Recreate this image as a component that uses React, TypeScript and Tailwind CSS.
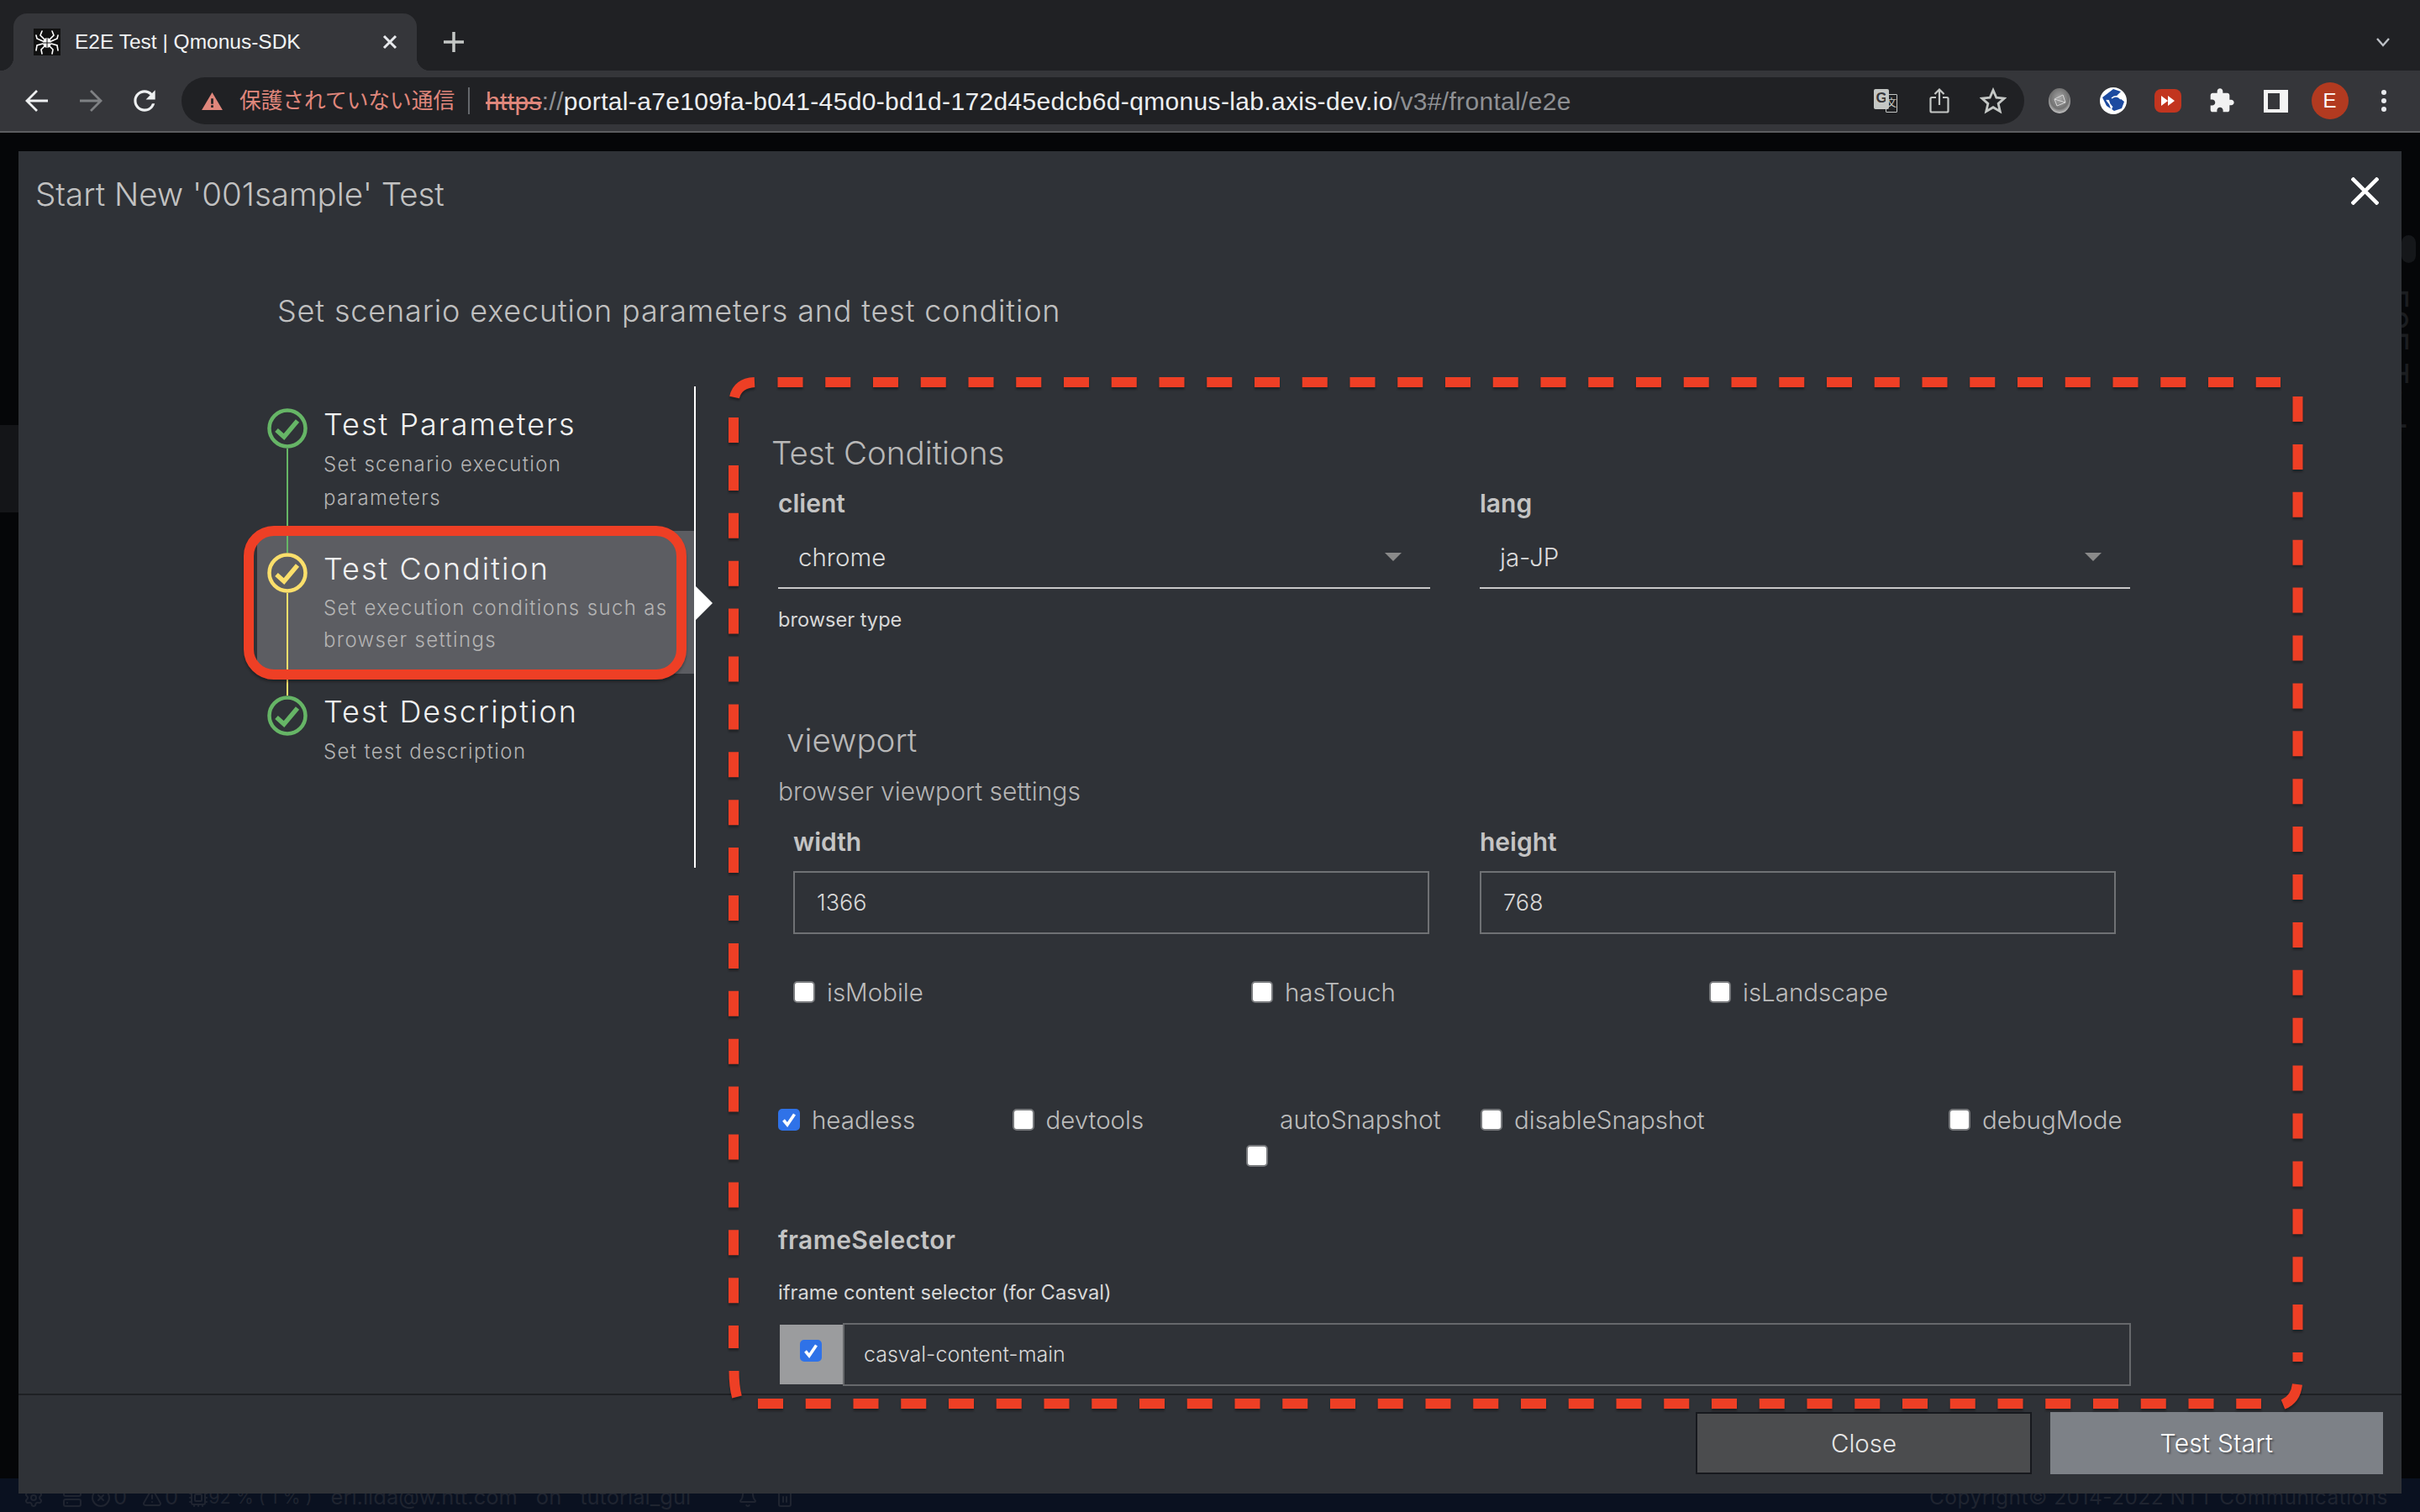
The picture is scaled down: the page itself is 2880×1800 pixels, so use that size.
import React from "react";
import { Settings, Server, XCircle, AlertTriangle, Cpu, Bell, Trash2 } from "lucide-react";

const Spider = () => (
  <svg viewBox="0 0 32 32" className="w-8 h-8">
    <rect width="32" height="32" fill="#111" />
    <g stroke="#fff" strokeWidth="1.6" fill="none" strokeLinecap="round">
      <path d="M13 13 L8 8 L10 3" />
      <path d="M19 13 L24 8 L22 3" />
      <path d="M11 15 L4 12 L3 8" />
      <path d="M21 15 L28 12 L29 8" />
      <path d="M11 18 L4 20 L3 26" />
      <path d="M21 18 L28 20 L29 26" />
      <path d="M13 21 L9 25 L10 30" />
      <path d="M19 21 L23 25 L22 30" />
    </g>
    <ellipse cx="16" cy="17" rx="5" ry="6" fill="#fff" />
    <path d="M11 17 H21 M16 11 V23" stroke="#111" strokeWidth="1" />
  </svg>
);

const StepCheck = ({ color }: { color: string }) => (
  <svg viewBox="0 0 48 48" className="w-12 h-12 shrink-0">
    <circle cx="24" cy="24" r="21.5" fill="none" stroke={color} strokeWidth="4.5" />
    <path d="M11 26 L20 34 L36 15" fill="none" stroke={color} strokeWidth="5.5" />
  </svg>
);

const Step = ({
  title,
  lines,
  color,
  prev,
  active,
  h,
  last,
}: {
  title: string;
  lines: string[];
  color: string;
  prev?: string;
  active?: boolean;
  h: string;
  last?: boolean;
}) => (
  <div className={`relative flex ${h} pl-3 ${active ? "bg-[#5c5d62]" : ""}`}>
    <div className="flex flex-col items-center w-12 shrink-0">
      <div className="w-[2px] h-[26px]" style={{ background: prev ?? "transparent" }} />
      <StepCheck color={color} />
      {!last && <div className="w-[2px] flex-1" style={{ background: color }} />}
    </div>
    <div className="ml-[19px] pt-[24px] min-w-0">
      <div className="text-[36px] leading-[42px] tracking-[2px] font-light text-[#f2f2f2] whitespace-nowrap">{title}</div>
      <div className="mt-[7px]">
        {lines.map((l) => (
          <div key={l} className={`text-[24px] ${active ? "leading-[38px]" : "leading-[40px]"} tracking-[1.35px] font-light text-[#b4b4b4] whitespace-nowrap`}>
            {l}
          </div>
        ))}
      </div>
    </div>
    {active && (
      <div className="absolute top-[66px] -right-[22px] w-0 h-0 border-y-[20px] border-l-[20px] border-y-transparent border-l-white" />
    )}
  </div>
);

const Box = ({ checked }: { checked?: boolean }) => (
  <span className="relative inline-flex w-[26px] h-[26px] shrink-0">
    <input
      type="checkbox"
      defaultChecked={checked}
      className="appearance-none w-[26px] h-[26px] m-0 rounded-[5px] bg-white border-2 border-[#77797c] checked:bg-[#2f72e8] checked:border-[#2f72e8]"
    />
    {checked && (
      <svg viewBox="0 0 26 26" className="absolute inset-0 w-[26px] h-[26px] pointer-events-none" fill="none" stroke="#fff" strokeWidth="3.6">
        <path d="M6.5 13.5 L11 19 L19.5 6.5" />
      </svg>
    )}
  </span>
);

const Check = ({ label, checked, cls }: { label: string; checked?: boolean; cls: string }) => (
  <label className={`flex items-center h-10 ${cls}`}>
    <Box checked={checked} />
    <span className="ml-[14px] text-[29.5px] font-light text-[#bcbcbc] whitespace-nowrap">{label}</span>
  </label>
);

const Label = ({ children, cls = "" }: { children: React.ReactNode; cls?: string }) => (
  <div className={`text-[30px] leading-10 font-semibold text-[#c4c4c4] ${cls}`}>{children}</div>
);

const Select = ({ value }: { value: string }) => (
  <div className="mt-[2px] flex items-center justify-between h-[80px] pt-[6px] pl-[24px] pr-[34px] border-b-2 border-[#c8c8c8]">
    <span className="text-[29.5px] font-light text-[#dcdcdc]">{value}</span>
    <span className="w-0 h-0 border-x-[10px] border-t-[10px] border-x-transparent border-t-[#8a8a8a]" />
  </div>
);

const Field = ({ value }: { value: string }) => (
  <input
    readOnly
    value={value}
    className="w-full h-[75px] px-[26px] border-2 border-[#6f7174] bg-transparent text-[27px] font-light text-[#d8d8d8] outline-none"
  />
);

const ChromeIconSlot = ({ children }: { children: React.ReactNode }) => (
  <div className="w-[64.3px] h-[64px] flex items-center justify-center shrink-0">{children}</div>
);

const DashedOverlay = () => (
  <svg
    viewBox="0 0 2880 1800"
    className="absolute inset-0 w-[2880px] h-[1800px] pointer-events-none drop-shadow-[0_3px_1px_rgba(0,0,0,0.3)]"
    fill="none"
    stroke="#ee3f25"
    strokeWidth="12"
  >
    <path d="M925.5 455 H2714" strokeDasharray="30 26.75" />
    <path d="M2734.5 472 V1621" strokeDasharray="30 26.9" />
    <path d="M873 497 V1605" strokeDasharray="30 26.9" />
    <path d="M902 1671 H2691" strokeDasharray="30 26.75" />
    <path d="M874 473 Q878 456 898 455" />
    <path d="M2734 1648 Q2732 1666 2717 1672" />
    <path d="M873.5 1632 Q873.5 1650 877 1663" />
  </svg>
);

export default function App() {
  return (
    <div className="relative w-screen h-screen overflow-hidden flex flex-col bg-[#050608] font-['Inter',sans-serif]">
      {/* browser tab strip */}
      <div className="h-[84px] shrink-0 bg-[#202124] flex items-end pl-4 pr-[12px] font-['Liberation_Sans','Noto_Sans_CJK_JP',sans-serif]">
        <div className="relative w-[480px] h-[68px] bg-[#35363a] rounded-t-[16px] flex items-center pl-6 pr-5">
          <span className="absolute -left-4 bottom-0 w-4 h-4 bg-[radial-gradient(circle_at_0_0,#202124_16px,#35363a_16.5px)]" />
          <span className="absolute -right-4 bottom-0 w-4 h-4 bg-[radial-gradient(circle_at_100%_0,#202124_16px,#35363a_16.5px)]" />
          <Spider />
          <span className="ml-[17px] flex-1 text-[24.5px] text-[#f1f3f4] whitespace-nowrap">E2E Test | Qmonus-SDK</span>
          <svg viewBox="0 0 20 20" className="w-5 h-5 -ml-[2px] mr-[2px]" stroke="#e8eaed" strokeWidth="3" fill="none">
            <path d="M3 3 L17 17 M17 3 L3 17" />
          </svg>
        </div>
        <div className="h-[68px] ml-[32px] flex items-center">
          <svg viewBox="0 0 24 24" className="w-6 h-6" stroke="#c4c7c5" strokeWidth="3.5" fill="none">
            <path d="M12 0 V24 M0 12 H24" />
          </svg>
        </div>
        <div className="flex-1" />
        <div className="h-[68px] flex items-center pr-[24px]">
          <svg viewBox="0 0 16 12" className="w-[16px] h-[12px]" stroke="#bdc1c6" strokeWidth="2.4" fill="none">
            <path d="M1 2 L8 10 L15 2" />
          </svg>
        </div>
      </div>

      {/* browser toolbar */}
      <div className="h-[74px] shrink-0 bg-[#35363a] border-b-2 border-[#5c5d60] flex items-center pl-3 font-['Liberation_Sans','Noto_Sans_CJK_JP',sans-serif]">
        <div className="w-16 h-16 flex items-center justify-center">
          <svg viewBox="0 0 28 28" className="w-7 h-7" stroke="#eef0f1" strokeWidth="2.8" fill="none">
            <path d="M27 14 H3 M14 2 L2 14 L14 26" />
          </svg>
        </div>
        <div className="w-16 h-16 flex items-center justify-center">
          <svg viewBox="0 0 28 28" className="w-7 h-7" stroke="#7f8184" strokeWidth="2.8" fill="none">
            <path d="M1 14 H25 M14 2 L26 14 L14 26" />
          </svg>
        </div>
        <div className="w-16 h-16 flex items-center justify-center">
          <svg viewBox="0 0 24 24" className="w-[38px] h-[38px]" fill="#eef0f1">
            <path d="M17.65 6.35A7.958 7.958 0 0 0 12 4c-4.42 0-7.99 3.58-7.99 8s3.57 8 7.99 8c3.73 0 6.84-2.55 7.73-6h-2.08A5.99 5.99 0 0 1 12 18c-3.31 0-6-2.69-6-6s2.69-6 6-6c1.66 0 3.14.69 4.22 1.78L13 11h7V4l-2.35 2.35z" />
          </svg>
        </div>
        <div className="ml-3 w-[2193px] h-14 rounded-full bg-[#202124] flex items-center pl-6 pr-[5px] text-[30px] tracking-[0.33px] whitespace-nowrap">
          <svg viewBox="0 0 26 22" className="w-[25px] h-[21px] shrink-0" fill="#e0877c">
            <path fillRule="evenodd" d="M13 0 L26 22 H0 Z M11.6 7.5 V14.5 H14.4 V7.5 Z M11.6 16 V18.8 H14.4 V16 Z" />
          </svg>
          <span className="ml-5 text-[25.7px] tracking-[0px] text-[#e0877c]">保護されていない通信</span>
          <span className="ml-[16px] w-[2px] h-8 bg-[#65686c]" />
          <span className="ml-[19px] text-[#e0877c] line-through">https</span>
          <span className="text-[#8e9093]">://</span>
          <span className="text-[#eceef0]">portal-a7e109fa-b041-45d0-bd1d-172d45edcb6d-qmonus-lab.axis-dev.io</span>
          <span className="text-[#8e9093]">/v3#/frontal/e2e</span>
          <div className="flex-1" />
          <div className="w-16 h-14 flex items-center justify-center">
            <div className="relative w-[28px] h-[28px] tracking-normal">
              <span className="absolute left-0 top-0 w-[18px] h-[24px] rounded-[2px] bg-[#c4c7c5] text-[#35363a] text-[17px] font-bold leading-[22px] text-center">G</span>
              <span className="absolute right-0 bottom-0 w-[14px] h-[22px] rounded-[1px] border border-[#c4c7c5] text-[#c4c7c5] text-[12px] leading-[20px] text-center">文</span>
            </div>
          </div>
          <div className="w-16 h-14 flex items-center justify-center">
            <svg viewBox="0 0 24 30" className="w-6 h-[30px]" fill="none" stroke="#c4c7c5" strokeWidth="2.2">
              <path d="M8 11 H3 Q1.5 11 1.5 12.5 V27 Q1.5 28.5 3 28.5 H21 Q22.5 28.5 22.5 27 V12.5 Q22.5 11 21 11 H16" />
              <path d="M12 20 V2 M6.5 7 L12 1.5 L17.5 7" />
            </svg>
          </div>
          <div className="w-16 h-14 flex items-center justify-center">
            <svg viewBox="0 0 24 24" className="w-[32px] h-[32px]" fill="none" stroke="#c4c7c5" strokeWidth="2.1">
              <path d="M12 2.5 L14.9 9.2 L22 9.8 L16.6 14.5 L18.2 21.5 L12 17.8 L5.8 21.5 L7.4 14.5 L2 9.8 L9.1 9.2 Z" />
            </svg>
          </div>
        </div>
        <div className="ml-[10px] flex items-center">
          <ChromeIconSlot>
            <svg viewBox="0 0 28 32" className="w-[28px] h-[32px]">
              <defs>
                <radialGradient id="orb" cx="50%" cy="40%" r="60%">
                  <stop offset="0%" stopColor="#a8a8a8" />
                  <stop offset="70%" stopColor="#717171" />
                  <stop offset="100%" stopColor="#c8c8c8" />
                </radialGradient>
              </defs>
              <ellipse cx="14" cy="16" rx="13" ry="15" fill="url(#orb)" />
              <path d="M8 14 L18 9 L21 18 L11 22 Z M8 14 L21 18" stroke="#d8d8d8" strokeWidth="1" fill="none" />
            </svg>
          </ChromeIconSlot>
          <ChromeIconSlot>
            <svg viewBox="0 0 32 32" className="w-8 h-8">
              <circle cx="16" cy="16" r="16" fill="#fff" />
              <path d="M3 12 L16 2 L25 5 L20 10 L29 17 L26 25 L17 28 L8 22 Z" fill="#1c4aa0" />
              <path d="M8 15 L15 24 M14 13 Q20 8 25 14 M10 15 L14 26" stroke="#fff" strokeWidth="1.5" fill="none" />
            </svg>
          </ChromeIconSlot>
          <ChromeIconSlot>
            <div className="w-[32px] h-[28px] rounded-[8px] bg-[#c2351f] flex items-center justify-center">
              <svg viewBox="0 0 16 12" className="w-4 h-3" fill="#fff">
                <path d="M0 0 L8 6 L0 12 Z M8 0 L16 6 L8 12 Z" />
              </svg>
            </div>
          </ChromeIconSlot>
          <ChromeIconSlot>
            <svg viewBox="0 0 24 24" className="w-8 h-8" fill="#f1f1f1">
              <path d="M20.5 11H19V7c0-1.1-.9-2-2-2h-4V3.5C13 2.12 11.88 1 10.5 1S8 2.12 8 3.5V5H4c-1.1 0-1.99.9-1.99 2v3.8H3.5c1.49 0 2.7 1.21 2.7 2.7s-1.21 2.7-2.7 2.7H2V20c0 1.1.9 2 2 2h3.8v-1.5c0-1.49 1.21-2.7 2.7-2.7 1.49 0 2.7 1.21 2.7 2.7V22H17c1.1 0 2-.9 2-2v-4h1.5c1.38 0 2.5-1.12 2.5-2.5S21.88 11 20.5 11z" />
            </svg>
          </ChromeIconSlot>
          <ChromeIconSlot>
            <div className="w-[29px] h-[27px] border-y-[4px] border-l-[5px] border-r-[10px] border-[#f4f4f4]" />
          </ChromeIconSlot>
          <ChromeIconSlot>
            <div className="w-11 h-11 rounded-full bg-[#b23a20] flex items-center justify-center text-[24px] text-white">E</div>
          </ChromeIconSlot>
          <ChromeIconSlot>
            <div className="flex flex-col gap-[4px]">
              <span className="w-[6px] h-[6px] rounded-full bg-[#e8eaed]" />
              <span className="w-[6px] h-[6px] rounded-full bg-[#e8eaed]" />
              <span className="w-[6px] h-[6px] rounded-full bg-[#e8eaed]" />
            </div>
          </ChromeIconSlot>
        </div>
      </div>

      {/* page behind the dialog */}
      <div className="relative flex-1 min-h-0">
        <div className="absolute left-0 top-[348px] w-[22px] h-[104px] bg-[#141518]" />
        <div className="absolute left-[2858px] top-[122px] w-[17px] h-[33px] rounded-full bg-[#15171a]" />
        <div className="absolute left-[2826px] top-[185px] text-[42px] leading-[48px] text-[#1b1d20] [writing-mode:vertical-rl] whitespace-nowrap">E2E Tests</div>
        <div className="absolute bottom-0 inset-x-0 h-10 bg-[#0a1120] flex items-center justify-between pt-[5px] pl-[28px] pr-[38px] text-[25.5px] text-[#1f2430] whitespace-nowrap">
          <div className="flex items-center">
            <Settings className="w-6 h-6" />
            <Server className="ml-[22px] w-6 h-6" />
            <XCircle className="ml-[10px] w-6 h-6" />
            <span className="ml-[3px]">0</span>
            <AlertTriangle className="ml-[18px] w-6 h-6" />
            <span className="ml-[3px]">0</span>
            <Cpu className="ml-[12px] w-6 h-6" />
            <span className="text-[21.5px]">92 % ( 1 % )</span>
            <span className="ml-[22px]">eri.iida@w.ntt.com</span>
            <span className="ml-[22px]">on</span>
            <span className="ml-[22px]">tutorial_gui</span>
            <Bell className="ml-[56px] w-6 h-6" />
            <Trash2 className="ml-[20px] w-6 h-6" />
          </div>
          <span className="tracking-[0.45px] text-[24.5px]">Copyright© 2014-2022 NTT Communications</span>
        </div>

        {/* dialog */}
        <div className="absolute left-[22px] top-[22px] w-[2836px] h-[1598px] bg-[#2f3237] flex flex-col">
          <div className="h-[100px] shrink-0 flex items-center justify-between pl-5 pr-[27px]">
            <div className="mt-[3px] text-[38.5px] font-light text-[#c2c2c2] whitespace-nowrap">Start New '001sample' Test</div>
            <svg viewBox="0 0 33 33" className="w-[33px] h-[33px] -mt-[5px]" stroke="#fff" strokeWidth="4.5" fill="none">
              <path d="M1 1 L32 32 M32 1 L1 32" />
            </svg>
          </div>

          <div className="flex-1 min-h-0 overflow-hidden">
            <div className="pt-[68px] pl-[308px] h-[112px] text-[36px] leading-[44px] font-light tracking-[0.85px] text-[#c0c0c0] whitespace-nowrap">
              Set scenario execution parameters and test condition
            </div>
            <div className="mt-[68px] ml-[284px] flex items-start">
              {/* stepper */}
              <div className="w-[522px] h-[573px] border-r-2 border-white shrink-0">
                <Step
                  title="Test Parameters"
                  lines={["Set scenario execution", "parameters"]}
                  color="#66b566"
                  h="h-[172px]"
                />
                <Step
                  title="Test Condition"
                  lines={["Set execution conditions such as", "browser settings"]}
                  color="#fbdf6b"
                  prev="#66b566"
                  active
                  h="h-[170px]"
                />
                <Step
                  title="Test Description"
                  lines={["Set test description"]}
                  color="#66b566"
                  prev="#fbdf6b"
                  h="h-[110px]"
                  last
                />
              </div>

              {/* form */}
              <div className="ml-[90px] w-[1640px] pt-[55px] shrink-0">
                <div className="text-[38.5px] leading-[48px] font-light text-[#b8b8b8]">Test Conditions</div>
                <div className="pl-2">
                  <div className="mt-[16px] grid grid-cols-[776px_774px] gap-x-[59px]">
                    <div>
                      <Label>client</Label>
                      <Select value="chrome" />
                      <div className="mt-[21px] text-[23.6px] leading-8 text-[#d8d8d8]">browser type</div>
                    </div>
                    <div>
                      <Label>lang</Label>
                      <Select value="ja-JP" />
                    </div>
                  </div>

                  <div className="mt-[103px] ml-[10px] text-[38.5px] leading-[48px] font-light text-[#b8b8b8]">viewport</div>
                  <div className="mt-[17px] text-[30px] leading-10 font-light text-[#b4b4b4]">browser viewport settings</div>

                  <div className="mt-[20px] grid grid-cols-[757px_757px] gap-x-[60px] ml-[18px]">
                    <div>
                      <Label>width</Label>
                      <div className="mt-[15px]"><Field value="1366" /></div>
                    </div>
                    <div>
                      <Label>height</Label>
                      <div className="mt-[15px]"><Field value="768" /></div>
                    </div>
                  </div>

                  <div className="mt-[49px] ml-[18px] grid grid-cols-[545px_545px_545px]">
                    <Check label="isMobile" cls="" />
                    <Check label="hasTouch" cls="" />
                    <Check label="isLandscape" cls="" />
                  </div>

                  <div className="mt-[112px] flex items-start h-[76px]">
                    <Check label="headless" checked cls="w-[278.5px]" />
                    <Check label="devtools" cls="w-[278.5px]" />
                    <div className="w-[279px]">
                      <div className="h-10 ml-10 text-[30px] leading-10 font-light text-[#bcbcbc]">autoSnapshot</div>
                      <div className="mt-[10px] flex"><Box /></div>
                    </div>
                    <Check label="disableSnapshot" cls="w-[557px]" />
                    <Check label="debugMode" cls="" />
                  </div>

                  <Label cls="mt-[67px] tracking-[0.4px]">frameSelector</Label>
                  <div className="mt-[27px] text-[23.7px] leading-8 text-[#d8d8d8]">iframe content selector (for Casval)</div>
                  <div className="mt-[20px] flex h-[75px] w-[1610px]">
                    <div className="w-[75px] ml-[2px] my-[2px] bg-[#9b9c9e] flex items-center justify-center shrink-0 pb-[10px] pr-[2px]">
                      <Box checked />
                    </div>
                    <div className="flex-1 flex items-center border-2 border-[#66686b] pl-[23px] text-[25px] font-light text-[#d8d8d8]">
                      casval-content-main
                    </div>
                  </div>
                </div>
              </div>
            </div>
          </div>

          <div className="h-[119px] shrink-0 border-t-2 border-[#1e2024] flex justify-end items-start gap-[22px] pt-[20px] pr-[22px]">
            <button className="w-[400px] h-[74px] bg-[#4b4c4e] border-2 border-[#17191e] text-[29.5px] font-light text-[#e6e6e6]">Close</button>
            <button className="w-[396px] h-[74px] bg-[#7d8187] text-[30px] tracking-[0.3px] font-light text-white [text-shadow:2px_2px_2px_rgba(0,0,0,0.35)]">Test Start</button>
          </div>
        </div>
      </div>

      {/* annotations drawn over the screenshot */}
      <div className="absolute left-[290px] top-[626px] w-[527px] h-[183px] border-[12px] border-[#ee3f25] rounded-[36px] shadow-[0_3px_3px_rgba(0,0,0,0.3)] pointer-events-none" />
      <DashedOverlay />
    </div>
  );
}
